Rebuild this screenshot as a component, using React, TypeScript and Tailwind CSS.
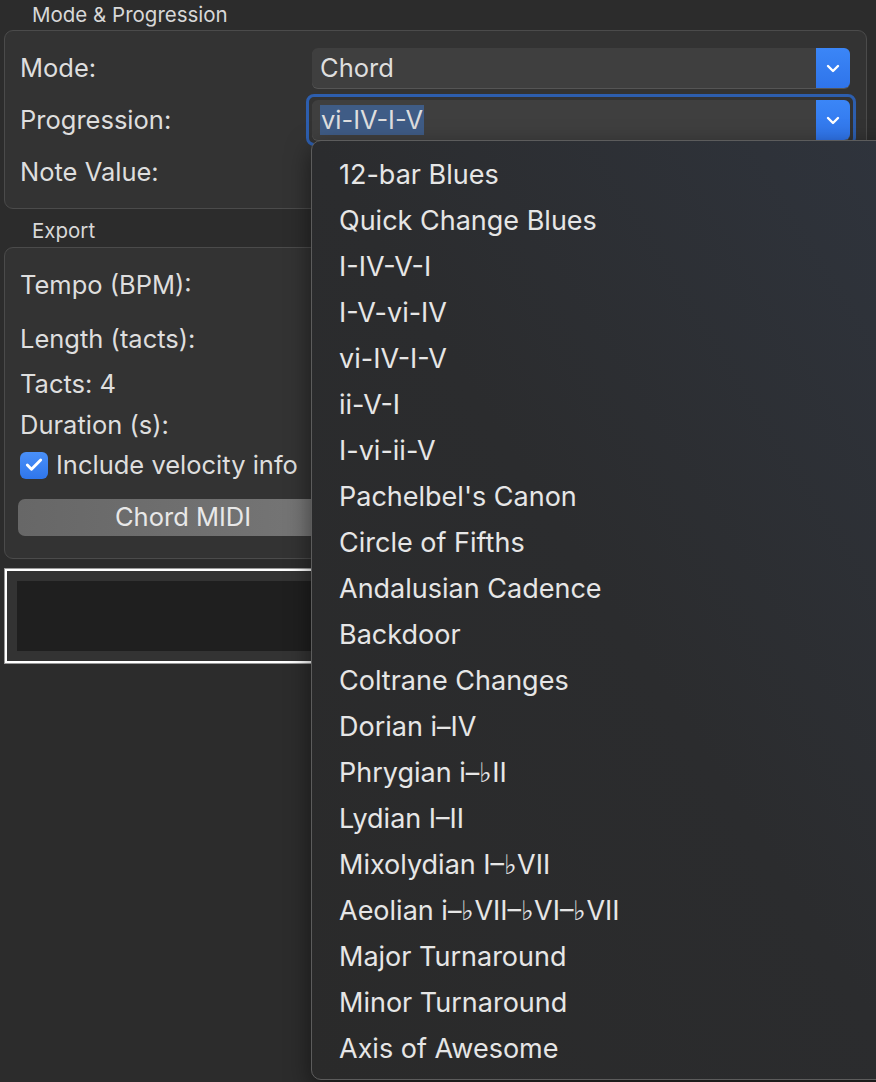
import { Check } from 'lucide-react'

const progressions = [
  '12-bar Blues',
  'Quick Change Blues',
  'I-IV-V-I',
  'I-V-vi-IV',
  'vi-IV-I-V',
  'ii-V-I',
  'I-vi-ii-V',
  "Pachelbel's Canon",
  'Circle of Fifths',
  'Andalusian Cadence',
  'Backdoor',
  'Coltrane Changes',
  'Dorian i–IV',
  'Phrygian i–♭II',
  'Lydian I–II',
  'Mixolydian I–♭VII',
  'Aeolian i–♭VII–♭VI–♭VII',
  'Major Turnaround',
  'Minor Turnaround',
  'Axis of Awesome',
]

function Chevron() {
  return (
    <svg width="14" height="9" viewBox="0 0 14 9" fill="none">
      <polyline points="2,2 7,7 12,2" stroke="white" strokeWidth="2.4" strokeLinecap="round" strokeLinejoin="round" />
    </svg>
  )
}

function SelectBox({ value, selected }: { value?: string; selected?: boolean }) {
  return (
    <div className="flex h-[40px] w-[538px] items-stretch rounded-[6px] bg-[#3f3f3f] shadow-[0_1px_0_#555]">
      <div className="flex flex-1 items-center pl-[8px]">
        {value && <span className={selected ? 'bg-[#3f5c86] px-[1px] leading-[30px]' : ''}>{value}</span>}
      </div>
      <div className="flex w-[34px] items-center justify-center rounded-r-[6px] bg-gradient-to-b from-[#3b86f7] to-[#2f74ea]">
        <Chevron />
      </div>
    </div>
  )
}

function FormRow({ label, children, h }: { label: string; children?: React.ReactNode; h: string }) {
  return (
    <div className={`flex items-center ${h}`}>
      <div className="w-[292px] shrink-0">{label}</div>
      {children}
    </div>
  )
}

export default function App() {
  return (
    <div
      className="relative h-[1082px] w-[876px] overflow-hidden bg-[#2c2c2c] text-[25.5px] text-[#dedede]"
      style={{ fontFamily: 'Inter, "Noto Sans", sans-serif' }}
    >
      <div className="flex flex-col pl-[4px] pr-[9px]">
        <div className="h-[30px] pl-[28px] text-[20.5px] leading-[30px] text-[#d8d8d8]">Mode &amp; Progression</div>
        <div className="flex h-[179px] flex-col gap-[12px] rounded-[9px] border border-[#4b4b4b] bg-[#333333] px-[15px] pt-[17px]">
          <FormRow label="Mode:" h="h-[40px]">
            <SelectBox value="Chord" />
          </FormRow>
          <FormRow label="Progression:" h="h-[40px]">
            <div className="-m-[6px] rounded-[8px] border-[3px] border-[#2d5eae] p-[3px]">
              <SelectBox value="vi-IV-I-V" selected />
            </div>
          </FormRow>
          <FormRow label="Note Value:" h="h-[40px]">
            <SelectBox />
          </FormRow>
        </div>

        <div className="h-[38px] pl-[28px] text-[20.5px] leading-[44px] text-[#d8d8d8]">Export</div>
        <div className="flex h-[312px] flex-col rounded-[9px] border border-[#4b4b4b] bg-[#333333] px-[15px] pt-[17px]">
          <FormRow label="Tempo (BPM):" h="h-[40px]" />
          <FormRow label="Length (tacts):" h="h-[40px] mt-[14px]" />
          <div className="mt-[12px] flex h-[26px] items-center">Tacts: 4</div>
          <div className="mt-[15px] flex h-[26px] items-center">Duration (s):</div>
          <label className="mt-[14px] flex h-[26px] items-center gap-[8px]">
            <span className="flex h-[27px] w-[28px] items-center justify-center rounded-[6px] bg-gradient-to-b from-[#4a90f8] to-[#2f76ec]">
              <Check size={20} strokeWidth={3.5} color="white" />
            </span>
            Include velocity info
          </label>
          <div className="mt-[21px] ml-[-2px] flex h-[37px] w-[330px] items-center justify-center rounded-[7px] bg-gradient-to-r from-[#676767] to-[#777777] text-[#e8e8e8]">
            Chord MIDI
          </div>
        </div>

        <div className="mt-[9px] h-[96px] border border-[#9a9a9a] bg-[#333333]">
          <div className="h-full border-[2px] border-white p-[10px]">
            <div className="h-full bg-[#1f1f1f]" />
          </div>
        </div>
      </div>

      <div className="absolute left-[311px] top-[140px] h-[940px] w-[600px] rounded-l-[10px] border border-[#5c5c5c] bg-gradient-to-bl from-[#2f343d] via-[#2b2c2e] to-[#2a2a2a] pt-[11px] shadow-[0_8px_24px_rgba(0,0,0,0.5)]">
        {progressions.map((p) => (
          <div key={p} className="flex h-[46px] items-center pl-[27px] text-[27px] text-[#e6e6e6]">
            {p}
          </div>
        ))}
      </div>
    </div>
  )
}
